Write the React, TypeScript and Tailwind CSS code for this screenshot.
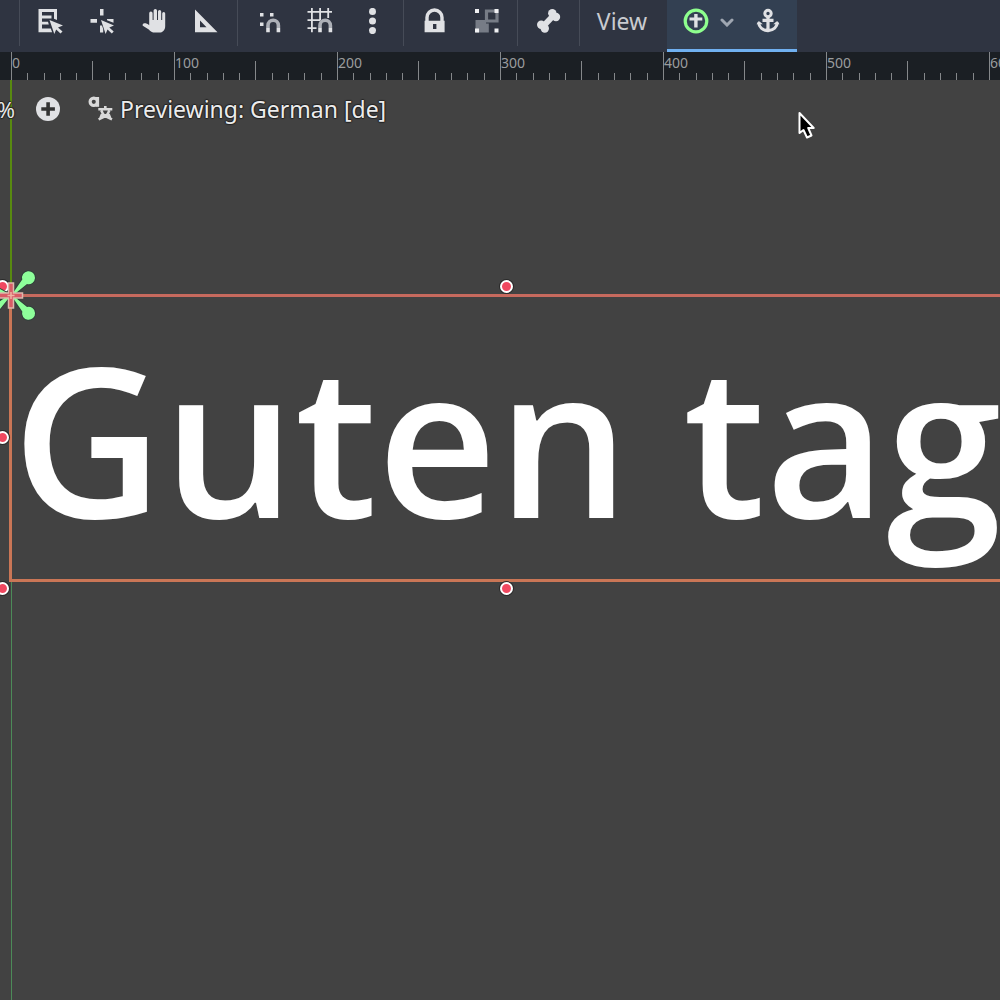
import { useEffect, useState, type ReactNode } from "react";

const INK = "#e0e1e4";

function Icon({ children, size = 26 }: { children: ReactNode; size?: number }) {
  return (
    <svg width={size} height={size} viewBox={`0 0 ${size} ${size}`} fill={INK} aria-hidden="true" className="shrink-0">
      {children}
    </svg>
  );
}

function ListSelectIcon() {
  return (
    <Icon>
      <path d="M1.500 1h18.500v11l-3-1.200V4H5v3.500h9.500v3H5v3.200h6l.8 2.800H5V20.500h8.800l1.300 3.800H1.500z" />
      <path d="M12.500 12L26 17.500L21 19.500L25.500 23.500L23.500 25.500L19.200 21.500L17.300 26Z" />
    </Icon>
  );
}

function PivotIcon() {
  return (
    <Icon>
      <path d="M11 1h3.500v6.500H11zM1.500 11H8v3.700H1.500zM18 11h6.500v3.700l-6.500-2.400zM11 17.500h2l1.200 3.500v3.500H11z" />
      <path d="M12 12L25 17.500L20.300 19.500L24.700 23.500L22.800 25.500L18.500 21.500L16.600 26Z" />
    </Icon>
  );
}

function HandIcon() {
  return (
    <Icon>
      <path d="M8.200 5.200a1.700 1.700 0 0 1 3.400 0V12h1V2.600a1.700 1.700 0 0 1 3.400 0V12h1V3.600a1.600 1.600 0 0 1 3.200 0V12h1V5.600a1.500 1.500 0 0 1 3 0V18c0 4-2.300 6.600-6 6.600h-4c-3 0-5-1.200-6.400-3.200L1.800 17.800c-.6-1 .1-2.500 1.600-2.500 1.900 0 3.200.6 4.800 2z" />
    </Icon>
  );
}

function RulerIcon() {
  return (
    <Icon>
      <path fillRule="evenodd" d="M2 1.500L24.500 24.300H2zM7 12.500v6.800h6.500z" />
    </Icon>
  );
}

function Magnet() {
  return (
    <>
      <path d="M13 20v-2.500a5.200 5.200 0 0 1 10.400 0V20" fill="none" stroke="#adb0b7" strokeWidth="3.600" />
      <path d="M11.200 20h3.600v4.300h-3.600zM21.600 20h3.600v4.300h-3.600z" />
    </>
  );
}

function SmartSnapIcon() {
  return (
    <Icon>
      <path d="M5 5h3.500v3.500H5zM15 5h3.500v3.500H15zM5 14.500h3.500V18H5z" />
      <Magnet />
    </Icon>
  );
}

function GridSnapIcon() {
  return (
    <Icon>
      <path d="M4 0h1.800v24.300H4zM12.200 0H14v12l-1.800 1.500zM20.300 0h1.800v10h-1.800zM0.500 3h24.500v1.800H0.500zM0.500 11.200h12.500V13H0.500zM0.500 19.300h9v1.800h-9z" />
      <Magnet />
    </Icon>
  );
}

function DotsIcon() {
  return (
    <Icon>
      <circle cx="13.500" cy="3.400" r="3.500" />
      <circle cx="13.500" cy="13" r="3.500" />
      <circle cx="13.500" cy="22.600" r="3.500" />
    </Icon>
  );
}

function LockIcon() {
  return (
    <Icon>
      <path d="M6 13V9.500a7.500 7.500 0 0 1 15 0V13" fill="none" stroke={INK} strokeWidth="3.400" />
      <path fillRule="evenodd" d="M3.600 12.800h20v11.500h-20zM12 16v5h3.400v-5z" />
    </Icon>
  );
}

function GroupIcon() {
  return (
    <Icon>
      <path d="M2.500 12h10.500v3.500h2.800v9H2.500z" fill="#777c86" />
      <path d="M13.500 3h10.500v10h-10.500z" fill="none" stroke="#777c86" strokeWidth="3.200" />
      <path d="M2 1h4v4H2zM21.500 1h4v4h-4zM2 20.500h4v4H2zM21.500 20.500h4v4h-4z" fill="#f0f0f2" />
    </Icon>
  );
}

function BoneIcon() {
  return (
    <Icon>
      <path d="M8 18.500L18.500 7.500" stroke={INK} strokeWidth="6" />
      <circle cx="17.300" cy="5.300" r="4.200" />
      <circle cx="21" cy="9" r="4.200" />
      <circle cx="6.200" cy="16.700" r="4.200" />
      <circle cx="9.800" cy="20.500" r="4.200" />
    </Icon>
  );
}

function AnchorModeIcon() {
  return (
    <Icon>
      <circle cx="13" cy="13" r="10.800" fill="none" stroke="#8eff8e" strokeWidth="3.200" />
      <path d="M11.200 6h3.400v3.400h4.700v3.200h-4.700v7h-3.400v-7H6.500V9.400h4.700z" />
    </Icon>
  );
}

function AnchorIcon() {
  return (
    <Icon>
      <circle cx="13" cy="5.500" r="3.200" fill="none" stroke={INK} strokeWidth="3" />
      <path d="M13 8.500V22M7.500 12.300h11M3.700 14.500c.3 4.500 3.800 7.800 9.300 8.200 5.500-.4 9-3.700 9.300-8.200" fill="none" stroke={INK} strokeWidth="3.200" />
      <path d="M1.500 16.300l2.300-3.300 4 3.300zM24.500 16.300l-2.300-3.300-4 3.300z" />
    </Icon>
  );
}

function Tool({ label, children }: { label: string; children: ReactNode }) {
  return (
    <button type="button" aria-label={label} title={label} className="flex h-[42px] w-[52px] shrink-0 items-center justify-center">
      {children}
    </button>
  );
}

function Group({ children }: { children: ReactNode }) {
  return <div className="flex h-[46px] shrink-0 border-r border-[#464b57] pr-[5px] pl-1">{children}</div>;
}

function Toolbar() {
  return (
    <header className="flex h-[52px] shrink-0 items-start overflow-hidden bg-[#2f3441]">
      <div className="h-[46px] w-5 shrink-0 border-r border-[#464b57]" />
      <Group>
        <Tool label="List selectable nodes"><ListSelectIcon /></Tool>
        <Tool label="Edit pivot"><PivotIcon /></Tool>
        <Tool label="Pan"><HandIcon /></Tool>
        <Tool label="Ruler"><RulerIcon /></Tool>
      </Group>
      <Group>
        <Tool label="Smart snap"><SmartSnapIcon /></Tool>
        <Tool label="Grid snap"><GridSnapIcon /></Tool>
        <Tool label="Snapping options"><DotsIcon /></Tool>
      </Group>
      <Group>
        <Tool label="Lock"><LockIcon /></Tool>
        <Tool label="Group"><GroupIcon /></Tool>
      </Group>
      <Group>
        <Tool label="Skeleton options"><BoneIcon /></Tool>
      </Group>
      <button type="button" className="flex h-[42px] w-[87px] shrink-0 items-center justify-center pr-[3px] text-[23px] text-[#c9cbd0]">
        View
      </button>
      <div className="flex h-[52px] w-[130px] shrink-0 border-b-[3px] border-b-[#70b0f0] bg-[#334052] pl-1">
        <button type="button" aria-label="Anchor presets" className="flex h-[42px] w-[71px] shrink-0 items-center gap-[10px] pl-3">
          <AnchorModeIcon />
          <svg width="16" height="12" viewBox="0 0 16 12" fill="none" stroke="#9fa6b1" strokeWidth="3" strokeLinecap="round" className="shrink-0" aria-hidden="true">
            <path d="M3 5l5 5 5-5" />
          </svg>
        </button>
        <Tool label="Anchor mode"><AnchorIcon /></Tool>
      </div>
    </header>
  );
}

const MARK_SPACING = 163;
const STEPS = Array.from({ length: 10 }, (_, i) => i);

function useMarks() {
  const count = () => Math.ceil(window.innerWidth / MARK_SPACING);
  const [marks, setMarks] = useState(count);
  useEffect(() => {
    const update = () => setMarks(count());
    window.addEventListener("resize", update);
    return () => window.removeEventListener("resize", update);
  }, []);
  return Array.from({ length: marks }, (_, i) => i * 100);
}

function RulerBar() {
  const marks = useMarks();
  return (
    <div className="flex h-7 shrink-0 overflow-hidden bg-[#1b1f24] pl-[11px]">
      {marks.map((mark) => (
        <div key={mark} className="relative flex w-[163px] shrink-0 items-end">
          {STEPS.map((s) => (
            <div
              key={s}
              className={
                s === 0
                  ? "h-full flex-1 border-l border-[#85888b]"
                  : s === 5
                    ? "h-[19px] flex-1 border-l border-[#85888b]"
                    : "h-[7px] flex-1 border-l border-[#85888b]"
              }
            />
          ))}
          <span className="absolute top-[3px] left-px text-[14px] leading-4 text-[#9a9c9e]">{mark}</span>
        </div>
      ))}
    </div>
  );
}

function Handle({ place }: { place: string }) {
  return (
    <span
      className={`absolute size-[13px] rounded-full border-2 border-white bg-[#f04860] shadow-[0_0_0_1px_#2a2a2a] ${place}`}
    />
  );
}

const outline = "[text-shadow:1px_0_1px_#222,-1px_0_1px_#222,0_1px_1px_#222,0_-1px_1px_#222]";

function Canvas() {
  return (
    <main className="relative flex-1 overflow-hidden bg-[#424242]">
      <div className="absolute top-0 left-[10px] h-[215px] w-[2px] bg-[#588a10]" />
      <div className="absolute top-[500px] bottom-0 left-[11px] w-px bg-[#4c8a58]" />

      <section className="absolute top-[214px] right-[-9px] left-[9px] h-[288px] border-[3px] border-[#ca7656] border-t-[#c76a5e]">
        <p className="pt-[11px] text-[208px] leading-[260px] font-semibold whitespace-nowrap text-white [font-family:'Open_Sans','Noto_Sans',sans-serif]">
          Guten tag
        </p>
      </section>

      <Handle place="top-[200px] left-[-4px]" />
      <Handle place="top-[200px] left-[500px]" />
      <Handle place="top-[351px] left-[-4px]" />
      <Handle place="top-[502px] left-[-4px]" />
      <Handle place="top-[502px] left-[500px]" />

      <svg width="38" height="60" viewBox="0 0 38 60" className="absolute top-[186px] left-0" aria-hidden="true">
        <g fill="#8eff9a" stroke="#30403a" strokeWidth="2" strokeLinejoin="round" paintOrder="stroke">
          <path d="M13 27L22.300 13.500A6.500 6.500 0 1 1 27 18L14 28.500Z" />
          <path d="M13 32L22.300 45.500A6.500 6.500 0 1 0 27 41L14 30.500Z" />
          <path d="M-2 22L10 28.500L10 30.500L0 43L-4 38L8 29.500L-4 26Z" />
        </g>
        <path d="M8.500 17h5v10h9v5h-9v10h-5V32h-10v-5h10z" fill="#d85c66" stroke="#dcb8ac" strokeWidth="1.500" />
        <path d="M11 26v7M7.500 29.500h7" stroke="#efb5a5" strokeWidth="1.500" />
      </svg>

      <div className="relative flex h-[58px] items-center">
        <div className={`flex w-[15px] justify-end text-[22px] text-[#e6e6e6] ${outline}`}>
          <span>%</span>
        </div>
        <button type="button" aria-label="Zoom in" className="ml-5 shrink-0">
          <Icon>
            <circle cx="13" cy="13" r="12" />
            <path d="M11.300 6.300h3.600v4.900h5v3.600h-5v5h-3.600v-5h-5v-3.600h5z" fill="#333" />
          </Icon>
        </button>
        <button type="button" className={`ml-[27px] flex items-center gap-[6px] text-[23px] whitespace-nowrap text-[#ececec] ${outline}`}>
          <Icon>
            <g fill="none" stroke="#d9d9d9" strokeWidth="3.200">
              <circle cx="5.800" cy="5.800" r="3.700" />
              <path d="M9.500 1v9.800" />
              <path d="M10.300 13.300h14M17.300 10v3.300M13.300 14.500l1.800 3.800 2.200 1.800 6.700 3.200M21.300 14.500l-1.800 3.800-2.200 1.800-6.700 3.200M12 23.300l2-5M22.600 23.300l-2-5" strokeWidth="2.600" />
            </g>
          </Icon>
          Previewing: German [de]
        </button>
      </div>

      <svg width="20" height="32" viewBox="0 0 20 32" className="absolute top-[30px] left-[797px]" aria-hidden="true">
        <path d="M2.500 3v20l4-3 3.500 7.500 4.500-2-3.300-7.500h5.500z" fill="#000" stroke="#fff" strokeWidth="2" strokeLinejoin="round" />
      </svg>
    </main>
  );
}

export default function App() {
  return (
    <div className="flex min-h-screen flex-col overflow-hidden [font-family:'Noto_Sans',sans-serif]">
      <Toolbar />
      <RulerBar />
      <Canvas />
    </div>
  );
}
